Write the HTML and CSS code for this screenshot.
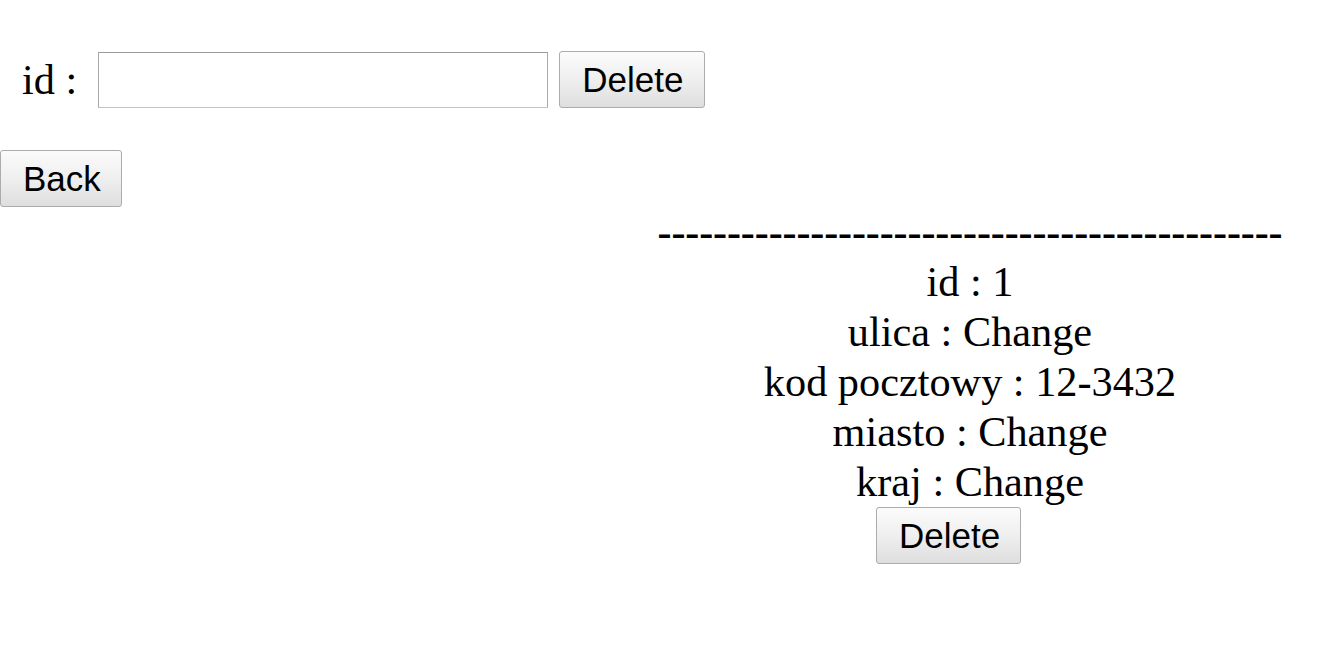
FILE: index.html
```html
<!DOCTYPE html>
<html lang="pl">
<head>
<meta charset="utf-8">
<title>Adresy</title>
<link rel="stylesheet" href="styles.css">
</head>
<body>
<form class="search">
  <label class="search-label" for="id">id :</label>
  <input class="search-input" id="id" type="text">
  <button class="btn btn-delete" type="button">Delete</button>
</form>
<div class="back-row">
  <button class="btn btn-back" type="button">Back</button>
</div>
<div class="record">
  <div class="line dashes">---------------------------------------------</div>
  <div class="line">id : 1</div>
  <div class="line">ulica : Change</div>
  <div class="line">kod pocztowy : 12-3432</div>
  <div class="line">miasto : Change</div>
  <div class="line">kraj : Change</div>
  <div class="record-actions"><button class="btn btn-record-delete" type="button">Delete</button></div>
</div>
</body>
</html>
```
FILE: styles.css
```css
html, body {
  margin: 0;
  padding: 0;
  background: #ffffff;
}

body {
  font-family: "Liberation Serif", "Times New Roman", serif;
  font-size: 42.3px;
  line-height: 50px;
  color: #000000;
}

.search {
  display: flex;
  align-items: center;
  margin: 0;
  padding: 51px 0 0 22px;
}

.search-label {
  margin-right: 21px;
}

.search-input {
  box-sizing: border-box;
  width: 450px;
  height: 56px;
  margin: 0;
  padding: 2px 6px;
  border: 1px solid #a9a9a9;
  border-top-color: #9a9a9a;
  border-bottom-color: #c4c4c4;
  background: #ffffff;
  font-family: "Liberation Sans", Arial, sans-serif;
  font-size: 34px;
  outline: none;
}

.btn {
  box-sizing: border-box;
  height: 57px;
  margin: 0;
  padding: 0 22px;
  border: 1px solid #acacac;
  border-radius: 3px;
  background: linear-gradient(to bottom, #fbfbfb 0%, #efefef 50%, #dedede 100%);
  font-family: "Liberation Sans", Arial, sans-serif;
  font-size: 35px;
  line-height: 40px;
  color: #000000;
  cursor: pointer;
}

.btn-delete {
  width: 146px;
  margin-left: 11px;
}

.back-row {
  margin-top: 42px;
}

.btn-back {
  width: 122px;
}

.record {
  margin: 0 0 0 599px;
  width: 742px;
  text-align: center;
}

.line {
  white-space: nowrap;
}

.dashes {
  font-size: 42px;
  font-weight: bold;
  letter-spacing: -0.1px;
}

.record-actions {
  height: 57px;
}

.btn-record-delete {
  width: 145px;
  margin-right: 43px;
}
```
